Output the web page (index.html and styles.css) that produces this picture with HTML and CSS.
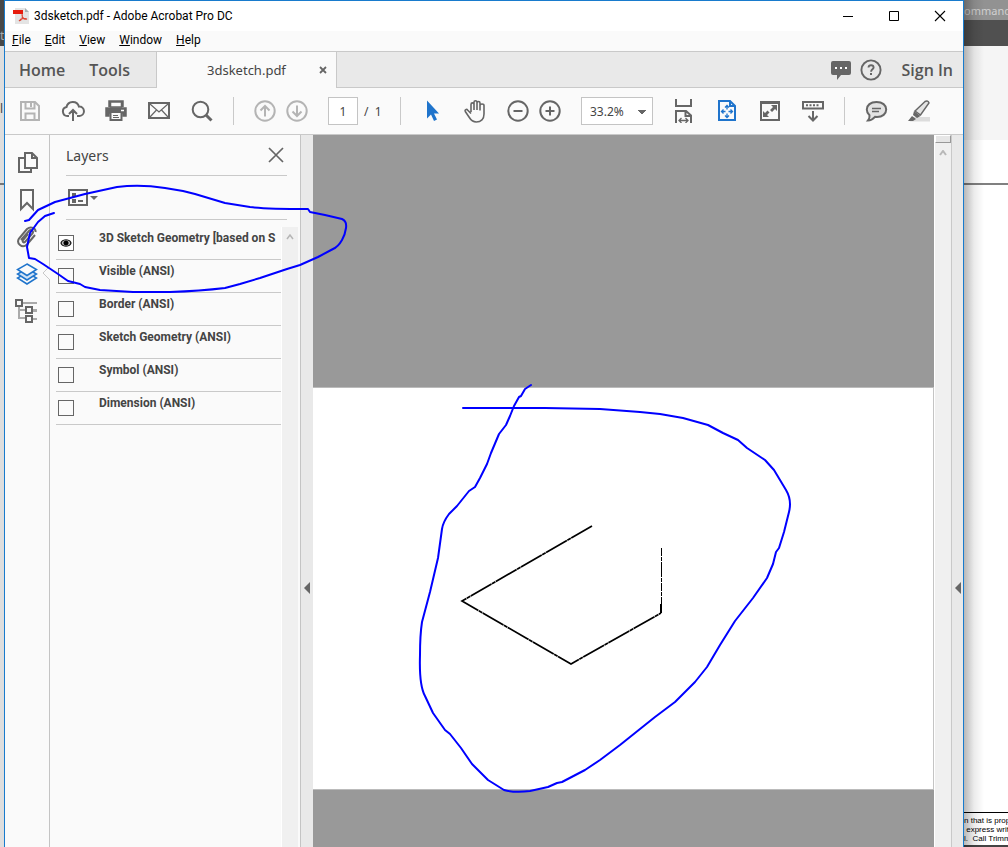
FILE: index.html
```html
<!DOCTYPE html>
<html lang="en">
<head>
<meta charset="utf-8">
<title>3dsketch.pdf - Adobe Acrobat Pro DC</title>
<link rel="stylesheet" href="styles.css">
</head>
<body>
<div class="desktop">
  <div class="behind-left"><div class="bl-dark">t</div><div class="bl-mid">l</div><div class="bl-rest"></div></div>
  <div class="window">
    <header class="titlebar">
      <svg class="app-icon" width="16" height="16" viewBox="0 0 16 16"><path d="M2 0h10l4 4v12H2z" fill="#e4e4e4"/><path d="M12 0v4h4z" fill="#a9b0b3"/><path d="M0 2h10v4H0z" fill="#e61b0c"/><path d="M6 13c3-1 4-4 3-7M9 7c0 3 3 5 5 4M6 13c2-3 5-3 8-2" fill="none" stroke="#dd4434" stroke-width="1.1"/></svg>
      <h1 class="title">3dsketch.pdf - Adobe Acrobat Pro DC</h1>
      <div class="win-buttons">
        <button aria-label="Minimize"><svg width="12" height="12"><path d="M1 6.5h10" stroke="#000"/></svg></button>
        <button aria-label="Maximize"><svg width="12" height="12"><path d="M1.5 1.5h9v9h-9z" fill="none" stroke="#000"/></svg></button>
        <button aria-label="Close window"><svg width="12" height="12"><path d="M1 1l10 10M11 1L1 11" stroke="#000" stroke-width="1.1"/></svg></button>
      </div>
    </header>
    <nav class="menubar">
      <button><u>F</u>ile</button><button><u>E</u>dit</button><button><u>V</u>iew</button><button><u>W</u>indow</button><button><u>H</u>elp</button>
    </nav>
    <div class="tabs">
      <div class="tabs-left"><button class="tab-btn">Home</button><button class="tab-btn">Tools</button></div>
      <div class="doc-tab"><span>3dsketch.pdf</span><button aria-label="Close tab"><svg width="8" height="8"><path d="M1 1l6 6M7 1L1 7" stroke="#666" stroke-width="1.8"/></svg></button></div>
      <div class="tabs-right">
        <button aria-label="Notifications"><svg width="22" height="22" viewBox="0 0 22 22"><path d="M3 2h16q2 0 2 2v10q0 2-2 2h-8l-4 5v-5H3q-2 0-2-2V4q0-2 2-2z" fill="#666"/><path d="M5 9h2m3 0h2m3 0h2" stroke="#fff" stroke-width="2"/></svg></button>
        <button aria-label="Help"><svg width="22" height="22" viewBox="0 0 22 22"><circle cx="11" cy="11" r="9.6" fill="none" stroke="#666" stroke-width="1.9"/><path d="M8.5 8.5q.2-2.2 2.6-2.2t2.5 2.2c0 1.8-2.5 1.9-2.5 4.2" fill="none" stroke="#666" stroke-width="1.9"/><path d="M10 14h2v2h-2z" fill="#666"/></svg></button>
        <button class="tab-btn sign-in">Sign In</button>
      </div>
    </div>
    <div class="toolbar">
      <button class="tool faded" aria-label="Save"><svg viewBox="0 0 24 24"><path d="M3 3h14l4 4v14H3zM7.5 3v6.500h9V3M7.5 21v-6.500h9V21"/><path d="M13 4v4"/></svg></button>
      <button class="tool" aria-label="Upload"><svg viewBox="0 0 24 24"><path d="M8 17H6.500a4.500 4.500 0 0 1-1-8.900 6.500 6.500 0 0 1 12.500-.5 4.700 4.700 0 0 1 .5 9.400H16M12 22V11M8 15l4-4 4 4"/></svg></button>
      <button class="tool" aria-label="Print"><svg viewBox="0 0 24 24"><path d="M5 8V2h14v6M2 9h20v8h-3v-3H5v3H2z" fill="#666" stroke-width="1.5"/><path d="M6.500 3h11v5h-11z" fill="#fafafa" stroke-width="1.5"/><path d="M6.500 13h11v8h-11z" fill="#fafafa"/><path d="M9 16.500h5m-5 2h6" stroke-width="1"/><path d="M17 11.500h3" stroke="#fff" stroke-width="1.5"/></svg></button>
      <button class="tool" aria-label="Email"><svg viewBox="0 0 24 24"><path d="M2 4h20v15H2z"/><path d="M3 5l9 8 9-8M3 18l6.500-7M21 18l-6.500-7" stroke-width="1.2"/></svg></button>
      <button class="tool" aria-label="Search"><svg viewBox="0 0 24 24"><circle cx="10.5" cy="10.5" r="7.8"/><path d="M16 16l5.500 5.500" stroke-width="3"/></svg></button>
      <span class="sep"></span>
      <div class="pair faded">
        <button class="tool" aria-label="Previous page"><svg viewBox="0 0 24 24"><circle cx="12" cy="12" r="9.7"/><path d="M12 17.500V7M7.500 11.500L12 7l4.500 4.500"/></svg></button>
        <button class="tool" aria-label="Next page"><svg viewBox="0 0 24 24"><circle cx="12" cy="12" r="9.7"/><path d="M12 6.500V17M7.500 12.500L12 17l4.500-4.500"/></svg></button>
      </div>
      <div class="pager"><input type="text" value="1" aria-label="Page number"><span>/&nbsp; 1</span></div>
      <span class="sep"></span>
      <button class="tool" aria-label="Select"><svg viewBox="0 0 24 24"><path d="M7 1.500v18l4-4 3 6.500 3-1.500-3-6h5z" fill="#1f74cc" stroke="none"/></svg></button>
      <button class="tool" aria-label="Pan"><svg viewBox="0 0 24 24"><path d="M8 13V5.500q0-1.600 1.500-1.600T11 5.500V11 3.200q0-1.500 1.500-1.500T14 3.200V11 4q0-1.500 1.500-1.500T17 4v7.500-5q0-1.500 2-1.500t2 1.500V15c0 5-3 8-7.700 8-3.500 0-5.500-2-7.300-5l-3.700-5.500c-.9-1.800 1.300-2.800 2.500-1.300L8 14.500" stroke-width="1.6"/></svg></button>
      <div class="pair">
        <button class="tool" aria-label="Zoom out"><svg viewBox="0 0 24 24"><circle cx="12" cy="12" r="9.7"/><path d="M7.500 12h9"/></svg></button>
        <button class="tool" aria-label="Zoom in"><svg viewBox="0 0 24 24"><circle cx="12" cy="12" r="9.7"/><path d="M7.500 12h9M12 7.500v9"/></svg></button>
      </div>
      <select class="zoom" aria-label="Zoom level"><option>33.2%</option></select>
      <button class="tool" aria-label="Fit width"><svg viewBox="0 0 24 24"><path d="M4 0v7h15V0M4 24V12h10l5 4.500V24M13.500 12v5H19"/><path d="M7 21.500h9M9.500 19L7 21.500 9.500 24M13.500 19l2.500 2.500-2.500 2.500" stroke-width="1.3"/></svg></button>
      <button class="tool blue" aria-label="Fit page"><svg viewBox="0 0 24 24"><path d="M4 2h11l5 5v14H4zM15 2v5h5"/><path d="M12 6.500v4m0 4v4M6.500 12.500h4m3 0h4M10 8.500l2-2 2 2M10 16.500l2 2 2-2M8.500 10.500l-2 2 2 2M15.500 10.500l2 2-2 2" stroke-width="1.3"/></svg></button>
      <button class="tool" aria-label="Full screen"><svg viewBox="0 0 24 24"><path d="M3 3h18v18H3zM3 4h18"/><path d="M13 6h6v6l-2-2-3 3-2-2 3-3zM5 12l2 2 2.500-2.500 2 2L9 16l2 2H5z" fill="#666" stroke="none"/></svg></button>
      <button class="tool" aria-label="Show toolbar"><svg viewBox="0 0 24 24"><path d="M2 3h20v6.500H2zM12 12v9M7.500 17l4.500 4.500 4.500-4.500"/><path d="M5 6.300h14" stroke-dasharray="2 1.5"/></svg></button>
      <span class="sep"></span>
      <button class="tool" aria-label="Comment"><svg viewBox="0 0 24 24"><path d="M12.500 3c6 0 9.700 3.200 9.700 7.500S18.500 18 13 18l-2-.2C9 20 6 21.500 4 21.500c1.300-1.500 1.700-3.500 1.500-5.200-1.700-1.500-2.700-3.500-2.700-5.800C2.800 6.200 6.500 3 12.500 3z" fill="#e3e3e3"/><path d="M8 9.500h9M8 12.500h7" stroke-width="1.3"/></svg></button>
      <button class="tool" aria-label="Highlight"><svg viewBox="0 0 24 24"><path d="M6 18h17v4.500H3z" fill="#dcdcdc" stroke="none"/><path d="M8 12L18 2.500q3-1.500 4 1.500L13.500 16z" fill="#e3e3e3" stroke-width="1.5"/><path d="M7 12l6.500 5-3.500 2-4-3zM5 17l4 3-3 2H1z" fill="#666" stroke="none"/></svg></button>
    </div>
    <div class="body">
      <nav class="rail">
        <button aria-label="Page thumbnails"><svg viewBox="0 0 24 24"><path d="M10 2h7l5 5v10H10zM17 2v5h5"/><path d="M9 7H4v14h12v-3"/></svg></button>
        <button aria-label="Bookmarks"><svg viewBox="0 0 24 24"><path d="M6 2h12v19l-6-6-6 6z"/></svg></button>
        <button aria-label="Attachments"><svg viewBox="0 0 24 24"><path d="M6 15l8-9c2-2 5 0 3.500 2.500L10 17c-1.500 1-3-.5-2-2l5-6M20 10l-8 9.500c-5 4.500-11-1-8-6L12 4c4-3.500 9-.5 8.500 3"/></svg></button>
        <button class="active" aria-label="Layers"><svg viewBox="0 0 24 24"><path d="M12 10.500l9.500 5.500-9.500 6-9.500-6z" fill="#fafafa"/><path d="M12 6.500l9.500 5.500-9.500 6-9.500-6z" fill="#d2e3f5"/><path d="M12 2l9.500 5.500-9.500 6-9.500-6z" fill="#fafafa"/></svg></button>
        <button aria-label="Tags"><svg viewBox="0 0 24 24"><path d="M7 4h15M4 7v12h8M4 11h18M18 12h4m-4 8h4" stroke="#aaa"/><path d="M1 1h6v6H1zM11 8h6v6h-6zM11 17h6v6h-6z" fill="#fafafa"/></svg></button>
      </nav>
      <section class="panel">
        <svg class="pointer" width="8" height="14"><path d="M8 0L1 7l7 7" fill="#fafafa" stroke="#c8c8c8"/></svg>
        <div class="panel-head"><h2>Layers</h2><button aria-label="Close panel"><svg width="16" height="16"><path d="M1 1l14 14M15 1L1 15" stroke="#666" stroke-width="1.7"/></svg></button></div>
        <div class="panel-tools"><button aria-label="Options"><svg width="30" height="18"><path d="M1 1h18v15H1z" fill="none" stroke="#666" stroke-width="2"/><path d="M4 4h4v4H4zM4 10h4v4H4zM10 11h5v2h-5zM22 7h8l-4 4z" fill="#666"/></svg></button></div>
        <div class="list">
          <ul class="layers">
            <li><input type="checkbox" id="l1" checked><label for="l1">3D Sketch Geometry [based on S</label></li>
            <li><input type="checkbox" id="l2"><label for="l2">Visible (ANSI)</label></li>
            <li><input type="checkbox" id="l3"><label for="l3">Border (ANSI)</label></li>
            <li><input type="checkbox" id="l4"><label for="l4">Sketch Geometry (ANSI)</label></li>
            <li><input type="checkbox" id="l5"><label for="l5">Symbol (ANSI)</label></li>
            <li><input type="checkbox" id="l6"><label for="l6">Dimension (ANSI)</label></li>
          </ul>
          <div class="list-scroll"><svg width="8" height="6"><path d="M1 5l3-4 3 4" fill="none" stroke="#b5b5b5" stroke-width="1.5"/></svg></div>
        </div>
      </section>
      <button class="splitter" aria-label="Collapse panel"><svg width="6" height="12"><path d="M6 0v12L0 6z" fill="#666"/></svg></button>
      <main class="doc">
        <div class="page">
          <svg viewBox="0 0 620 401" role="img" aria-label="3D sketch">
            <g fill="none" stroke="#000">
              <path d="M279 138L149 213l109 63 90-51" stroke-width="1.7" stroke-dasharray="24 .5 4 .5"/>
              <path d="M348.500 160v57" stroke-width="1" stroke-dasharray="8 1 4 1 15 1 4 1"/>
              <path d="M348 216v9" stroke-width="2"/>
            </g>
          </svg>
        </div>
      </main>
      <div class="scrollbar"><div class="split-box"></div><svg width="8" height="6"><path d="M1 5l3-4 3 4" fill="none" stroke="#b8b8b8" stroke-width="2"/></svg></div>
      <button class="splitter right" aria-label="Open tools pane"><svg width="6" height="12"><path d="M6 0v12L0 6z" fill="#666"/></svg></button>
    </div>
  </div>
  <aside class="behind-right">
    <div class="br-title">ommand</div><div class="br-dark"></div><div class="br-light"></div><div class="br-white"></div>
    <div class="br-rest"></div>
    <div class="br-note"><p>n that is prop</p><p>&nbsp;express writ</p><p>l.&nbsp; Call Trimm</p></div>
  </aside>
  <svg class="ink" width="1008" height="847" viewBox="0 0 1008 847">
    <path d="M25 221L29 220L38 210L55 202L85 194L117 187Q140 184 165 188L183 191L195 194L225 203L250 207Q265 209 308 209L310 212L325 215L342 219Q347 221 346 228Q345 235 342 240Q338 247 333 249L318 257L300 265L287 269L260 278L240 284L225 288Q200 291 170 292L133 292L100 290L85 287L80 284L68 281L58 274L43 264L35 259L29 258L27 247L30 233L38 222L45 216L54 213"/>
    <path d="M463 408L500 408L545 408L600 409L640 412L660 414L683 418L708 425L723 433L738 440L747 448L765 460L774 470L780 480L786 490Q792 500 789 512L784 532L779 548L776 552L773 564L767 578L753 598L735 621L720 645L707 667L695 682L675 702L655 717L640 729L620 745L600 760L585 770L562 782L557 783L548 787L530 791Q515 793 504 790L488 780L472 764L461 748L450 734L445 730L433 713L425 696Q419 685 420 655Q420 635 422 622L430 592L438 558L442 529Q443 522 449 514L457 506L469 491L475 487L480 478L487 464L491 453L499 434L506 425L510 416L514 406L519 397L521 396L525 389L531 385"/>
  </svg>
</div>
</body>
</html>
```
FILE: styles.css
```css
* { box-sizing: border-box; }
body { margin: 0; font-family: "Noto Sans", "Open Sans", sans-serif; font-size: 12px; color: #444; }
button { border: 0; padding: 0; background: none; font: inherit; color: inherit; display: flex; align-items: center; justify-content: center; }
h1, h2, p, ul { margin: 0; padding: 0; font-weight: 400; }
svg { display: block; flex: none; }

.desktop { position: relative; display: flex; min-height: 100vh; overflow: hidden; background: #fff; }
.window { flex: 1; min-width: 0; display: flex; flex-direction: column; border: 1px solid #187bcd; border-bottom: 0; background: #fafafa; }

.behind-left { width: 4px; display: flex; flex-direction: column; overflow: hidden; background: #dedede; }
.bl-dark { height: 46px; padding-top: 28px; line-height: 16px; background: #484848; color: #aaa; }
.bl-mid { height: 139px; padding-top: 54px; line-height: 18px; border-bottom: 2px solid #777; }

.titlebar { height: 30px; flex: none; display: flex; align-items: center; padding: 0 17px 0 8px; background: #fff; color: #000; }
.title { flex: 1; margin-left: 5px; font-family: Roboto, sans-serif; font-size: 12px; line-height: 16px; }
.win-buttons { display: flex; gap: 34px; }

.menubar { height: 20px; flex: none; display: flex; align-items: center; gap: 14px; padding: 0 0 2px 7px; color: #000; font-family: Roboto, sans-serif; }

.tabs { height: 37px; flex: none; display: flex; border-top: 1px solid #c9c9c9; background: #e9e9e9; }
.tabs-left { width: 152px; display: flex; gap: 24px; padding-left: 14px; border-right: 1px solid #c9c9c9; border-bottom: 1px solid #c9c9c9; }
.tab-btn { font-family: "Open Sans", sans-serif; font-size: 16px; font-weight: 600; color: #555; }
.doc-tab { width: 180px; display: flex; align-items: center; padding: 0 9px 0 50px; justify-content: space-between; border-right: 1px solid #c9c9c9; background: #fafafa; font-size: 13px; }
.tabs-right { flex: 1; display: flex; align-items: center; justify-content: flex-end; gap: 8px; padding-right: 10px; border-bottom: 1px solid #c9c9c9; }
.sign-in { margin-left: 12px; }

.toolbar { height: 47px; flex: none; display: flex; align-items: center; gap: 19px; padding-left: 13px; border-bottom: 1px solid #c9c9c9; }
.tool, .tool svg, .rail svg { width: 24px; height: 24px; flex: none; }
.tool svg, .rail svg { fill: none; stroke: #666; stroke-width: 2; }
.faded svg { stroke: #b4b4b4; }
.tool.faded svg, .faded .tool svg { stroke: #b4b4b4; }
.tool.blue svg, .rail .active svg { stroke: #1f74cc; }
.sep { width: 1px; height: 28px; background: #c9c9c9; flex: none; }
.pair { display: flex; gap: 8px; }
.pager { width: 53px; display: flex; align-items: center; gap: 6px; white-space: nowrap; }
.pager input { width: 30px; height: 28px; flex: none; padding: 0; border: 1px solid #c4c4c4; background: #fff; text-align: center; font: inherit; color: #444; }
.zoom { appearance: none; width: 72px; height: 28px; margin: 0; padding: 0 8px; border: 1px solid #c4c4c4; border-radius: 0; font: inherit; color: #444; background: linear-gradient(to bottom right, #666 50%, transparent 50%) 60px 12px / 4px 5px no-repeat, linear-gradient(to bottom left, #666 50%, transparent 50%) 56px 12px / 4px 5px no-repeat, #fff; }

.body { flex: 1; display: flex; min-height: 0; }
.rail { width: 45px; flex: none; display: flex; flex-direction: column; align-items: center; gap: 13px; padding-top: 16px; border-right: 1px solid #c4c4c4; }
.rail .active svg { stroke-width: 1.5; }
.panel { position: relative; width: 251px; flex: none; display: flex; flex-direction: column; border-right: 1px solid #c4c4c4; }
.pointer { position: absolute; left: -8px; top: 131px; }
.panel-head { height: 41px; margin: 0 13px 0 16px; display: flex; align-items: center; justify-content: space-between; border-bottom: 1px solid #c9c9c9; }
.panel-head h2 { font-size: 14px; }
.panel-head button { padding-right: 3px; }
.panel-tools { height: 44px; margin: 0 13px 7px 16px; padding-left: 2px; display: flex; align-items: center; border-bottom: 1px solid #c9c9c9; }
.list { flex: 1; display: flex; padding: 0 2px 0 6px; }
.layers { flex: 1; min-width: 0; list-style: none; }
.layers li { height: 33px; display: flex; align-items: flex-start; padding-left: 2px; border-bottom: 1px solid #c9c9c9; overflow: hidden; }
.layers input { appearance: none; width: 16px; height: 16px; flex: none; margin: 8px 25px 0 0; border: 1px solid #666; background: #fafafa; }
.layers input:checked { background: radial-gradient(circle at 7px 7px, #000 2px, transparent 3px), radial-gradient(ellipse 6px 4px at 7px 7px, #bbb 60%, #000 80%, transparent 100%), #fff; }
.layers label { padding-top: 3px; line-height: 16px; font-family: Roboto, sans-serif; font-size: 12px; font-weight: 700; white-space: nowrap; }
.list-scroll { width: 17px; border-left: 1px solid #fff; padding: 7px 4px; background: #f0f0f0; }

.splitter { width: 12px; flex: none; background: #e9e9e9; padding-top: 194px; }
.splitter.right { border-left: 1px solid #c9c9c9; }
.doc { flex: 1; min-width: 0; padding-top: 252px; background: #999; }
.page { border-top: 1px solid #bbb; border-right: 1px solid #c4c4c4; border-bottom: 1px solid #bbb; background: #fff; }
.page svg { width: 100%; height: auto; }
.scrollbar { width: 17px; flex: none; display: flex; flex-direction: column; align-items: center; gap: 7px; background: #f0f0f0; border-left: 1px solid #fff; }
.split-box { width: 16px; height: 8px; border: 1px solid #fff; border-right-color: #999; border-bottom-color: #999; background: #e6e6e6; }

.behind-right { width: 44px; flex: none; display: flex; flex-direction: column; overflow: hidden; position: relative; background: #fff; }
.behind-right::after { content: ""; position: absolute; inset: 0 auto 0 0; width: 20px; background: linear-gradient(to right, rgba(0, 0, 0, .28), rgba(0, 0, 0, .08) 50%, transparent); }
.br-title { height: 20px; padding-top: 2px; line-height: 18px; background: #929292; color: #d0d0d0; font-size: 11px; }
.br-dark { height: 26px; background: #505050; }
.br-light { height: 94px; background: #f5f5f5; }
.br-white { height: 45px; border-bottom: 2px solid #808080; }
.br-rest { flex: 1; }
.br-note { height: 35px; padding-top: 3px; border-top: 1px solid #000; border-bottom: 2px solid #444; font-family: "Liberation Sans", sans-serif; font-size: 8px; line-height: 9px; color: #000; white-space: nowrap; }

.ink { position: absolute; left: 0; top: 0; pointer-events: none; fill: none; stroke: #00f; stroke-width: 2; stroke-linejoin: round; stroke-linecap: round; }
```
